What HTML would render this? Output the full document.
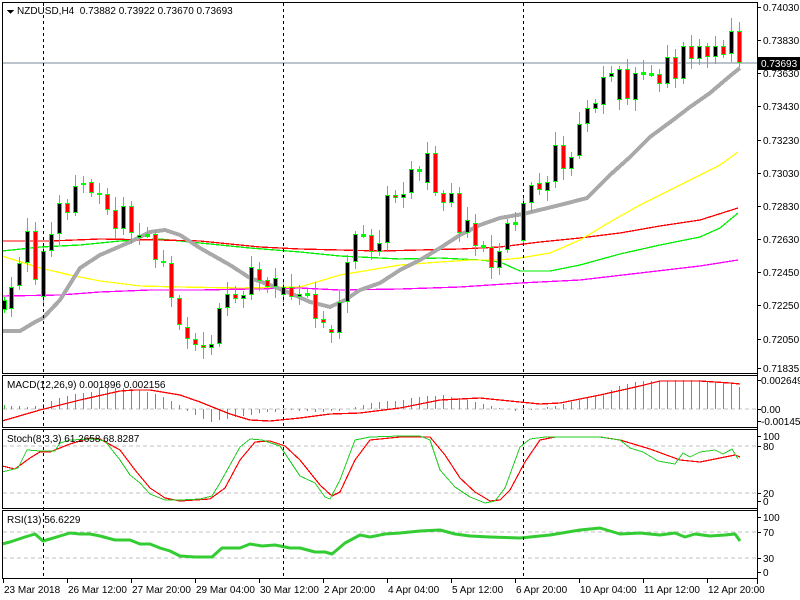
<!DOCTYPE html>
<html><head><meta charset="utf-8">
<style>
html,body{margin:0;padding:0;background:#fff;width:800px;height:600px;overflow:hidden}
svg{display:block}
text{font-family:"Liberation Sans","DejaVu Sans",sans-serif;font-size:10px;fill:#000}
</style></head>
<body>
<svg id="s" width="800" height="600" xmlns="http://www.w3.org/2000/svg" shape-rendering="crispEdges">
<rect width="800" height="600" fill="#fff"/>
</svg>
<script>
var s=document.getElementById('s'),h='';
function ln(x1,y1,x2,y2,c,w,d){h+='<line x1="'+x1+'" y1="'+y1+'" x2="'+x2+'" y2="'+y2+'" stroke="'+c+'" stroke-width="'+(w||1)+'"'+(d?' stroke-dasharray="'+d+'"':'')+'/>';}
function pl(p,c,w,geo){h+='<polyline fill="none" stroke="'+c+'" stroke-width="'+w+'" stroke-linejoin="round" '+(geo?'shape-rendering="auto" ':'')+'points="'+p.map(function(a){return a.join(',')}).join(' ')+'"/>';}
function tx(x,y,t,fill){h+='<text x="'+x+'" y="'+y+'"'+(fill?' style="fill:'+fill+'"':'')+'>'+t+'</text>';}
ln(2,63,757,63,'#778899',1);
ln(3,409,757,409,'#c0c0c0',1,'4,3');
ln(3,446,757,446,'#c0c0c0',1,'4,3');ln(3,493,757,493,'#c0c0c0',1,'4,3');
ln(3,532,757,532,'#c0c0c0',1,'4,3');ln(3,558,757,558,'#c0c0c0',1,'4,3');
pl([[2,296],[60,295],[100,292],[150,290],[200,290],[250,289],[300,288],[340,290],[400,289],[460,287],[520,283],[580,280],[640,273],[700,266],[738,260]],'#ff00ff',1.3);
pl([[2,251],[40,247],[80,245],[120,241],[160,239],[200,243],[250,248],[300,252],[340,256],[400,259],[440,258],[480,260],[500,262],[520,271],[550,271],[580,265],[620,254],[660,245],[700,237],[720,228],[738,213]],'#00ee00',1.3);
pl([[2,241],[50,241],[100,239],[160,240],[200,241],[260,247],[300,249],[340,250],[380,251],[420,250],[460,249],[500,247],[540,242],[580,238],[620,233],[660,226],[700,220],[738,208]],'#ff0000',1.3);
pl([[2,256],[40,268],[70,275],[100,281],[140,286],[180,287],[240,288],[300,287],[340,275],[400,265],[440,262],[470,260],[500,260],[520,258],[550,253],[580,240],[610,222],[640,205],[680,185],[720,165],[738,152]],'#ffff00',1.3);
pl([[2,331],[20,331],[35,322],[43,318],[60,300],[80,268],[100,255],[130,242],[150,232],[165,230],[180,235],[200,248],[230,265],[250,278],[270,285],[290,293],[310,302],[330,307],[345,300],[360,290],[380,283],[400,270],[420,260],[440,248],[460,235],[480,225],[500,218],[523,214],[560,205],[587,198],[610,175],[630,157],[650,137],[673,120],[690,107],[710,93],[730,76],[740,68]],'#a9a9a9',4);
var C=[[4,310,300],[11,309,287],[19,286,263],[27,263,231],[35,231,280],[43,297,251],[51,251,234],[59,234,203],[67,203,213],[75,213,186],[83,185,183],[91,182,193],[99,193,195],[107,194,210],[115,210,229],[123,229,206],[131,206,233],[139,238,235],[147,235,235],[155,234,260],[163,261,263],[171,263,298],[179,298,325],[187,327,339],[195,339,345],[203,345,348],[211,348,344],[219,344,308],[227,308,294],[235,294,299],[243,299,295],[251,295,267],[259,269,281],[267,280,287],[275,287,278],[283,295,287],[291,287,297],[299,297,294],[307,294,294],[315,294,319],[323,319,323],[331,329,333],[339,333,302],[347,302,262],[355,262,234],[363,235,235],[371,235,252],[379,252,243],[387,243,195],[395,195,198],[403,198,194],[411,193,169],[419,170,170],[427,183,153],[435,153,193],[443,193,203],[451,203,193],[459,193,233],[467,233,220],[475,223,246],[483,246,246],[491,247,268],[499,268,251],[507,250,223],[515,223,223],[523,241,203],[531,203,185],[539,183,190],[547,191,182],[555,182,145],[563,145,169],[571,169,157],[579,156,124],[587,124,108],[595,109,103],[603,105,77],[611,77,73],[619,100,69],[627,69,99],[635,100,73],[643,73,73],[651,74,74],[659,74,84],[667,84,57],[675,57,79],[683,79,46],[691,46,59],[699,59,46],[707,46,57],[715,57,46],[723,46,55],[731,54,31],[739,31,63]];
C.forEach(function(c,i){var x=c[0],t=Math.min(c[1],c[2]),b=Math.max(c[1],c[2]);var hi=t-(3+(i*7)%11),lo=b+(3+(i*5)%9);
ln(x+0.5,hi,x+0.5,lo,'#00ff00',1);
var bull=c[2]<c[1];if(b-t<2){h+='<rect x="'+(x-2)+'" y="'+(t-1)+'" width="5" height="3" fill="#00ff00"/>';return;}
h+='<rect x="'+(x-1.5)+'" y="'+(t+0.5)+'" width="4" height="'+(b-t-1)+'" fill="'+(bull?'#000':'#ff0000')+'" stroke="#00ff00" stroke-width="1"/>';});
function interp(P,x){for(var i=0;i<P.length-1;i++){if(x>=P[i][0]&&x<=P[i+1][0]){var f=(x-P[i][0])/(P[i+1][0]-P[i][0]);return P[i][1]+f*(P[i+1][1]-P[i][1]);}}return P[P.length-1][1];}
var MH=[[3,405],[30,407],[43,404],[60,398],[75,394],[90,392],[100,388],[125,388],[150,392],[170,400],[180,406],[190,413],[210,422],[230,418],[260,413],[290,410],[320,412],[340,411],[360,405],[380,402],[400,400],[420,397],[440,395],[460,398],[480,403],[500,408],[520,412],[530,410],[560,405],[580,400],[600,395],[620,385],[640,381],[700,380],[730,383],[739,387]];
C.forEach(function(c){var x=c[0],v=Math.round(interp(MH,x));if(Math.abs(v-409)>=1)ln(x+0.5,409,x+0.5,v,'#3cb83c',1.2);});
pl([[2,421],[40,410],[80,400],[120,391],[135,390],[150,390],[180,395],[200,402],[230,414],[250,420],[270,421],[300,418],[330,414],[360,413],[400,408],[440,400],[480,398],[520,402],[540,404],[560,403],[600,395],[640,386],[660,381],[700,381],[730,383],[740,384]],'#ff0000',1.3);
pl([[2,466],[15,469],[30,458],[40,452],[50,452],[70,444],[90,438],[100,439],[120,450],[135,470],[150,488],[165,498],[180,501],[210,499],[225,488],[240,460],[255,442],[270,441],[285,446],[300,460],[320,485],[332,496],[340,492],[355,460],[370,440],[400,437],[430,437],[445,455],[460,478],[475,492],[490,501],[500,500],[510,490],[525,462],[540,440],[555,437],[600,437],[620,440],[650,449],[680,460],[700,462],[720,458],[735,455],[740,457]],'#ff0000',1.2);
pl([[2,472],[10,470],[18,468],[27,450],[40,451],[55,451],[60,443],[70,440],[95,439],[105,441],[120,460],[130,475],[140,483],[150,494],[165,500],[180,500],[200,499],[212,496],[220,483],[240,447],[250,439],[262,440],[280,446],[300,476],[315,483],[325,497],[330,499],[340,480],[355,440],[370,437],[400,436],[420,436],[430,440],[440,470],[455,487],[470,497],[485,503],[495,501],[505,488],[520,447],[530,439],[545,437],[600,437],[620,440],[630,448],[643,452],[658,461],[675,464],[683,453],[690,457],[700,452],[715,450],[723,454],[732,449],[738,459]],'#22cc22',1);
pl([[2,544],[10,542],[25,537],[35,534],[43,541],[50,539],[60,536],[70,533],[80,534],[90,534],[100,536],[115,540],[130,540],[140,544],[150,544],[160,548],[170,551],[180,556],[195,557],[212,557],[222,548],[240,548],[250,544],[262,546],[275,545],[290,548],[300,548],[315,552],[325,552],[332,554],[345,543],[360,535],[370,537],[385,534],[400,533],[420,531],[440,530],[455,534],[470,536],[490,537],[520,538],[550,535],[580,530],[600,528],[620,534],[640,533],[660,535],[675,533],[685,537],[695,534],[710,536],[725,535],[735,534],[740,541]],'#33cc33',3,true);
[43,283,523].forEach(function(x){ln(x+0.5,3,x+0.5,579,'#000',1,'3,3');});
function fr(y1,y2){h+='<rect x="2.5" y="'+(y1+0.5)+'" width="755" height="'+(y2-y1)+'" fill="none" stroke="#000"/>';}
fr(2,373);fr(375,427);fr(429,508);fr(510,578);
ln(757.5,2,757.5,584,'#000',1);
var P=[[7,'0.74030'],[40,'0.73830'],[73,'0.73630'],[106,'0.73430'],[140,'0.73230'],[173,'0.73030'],[206,'0.72830'],[239,'0.72630'],[272,'0.72450'],[305,'0.72250'],[339,'0.72050'],[368,'0.71835']];
P.forEach(function(p){ln(757,p[0]+0.5,761,p[0]+0.5,'#000');tx(763,p[0]+4,p[1]);});
h+='<rect x="758" y="57" width="42" height="13" fill="#000"/>';tx(761,67,'0.73693','#fff');
[[380,'0.002649'],[409,'0.00'],[421,'-0.001456']].forEach(function(p){ln(757,p[0]+0.5,761,p[0]+0.5,'#000');tx(761,p[0]+4,p[1]);});
[[436,'100'],[446,'80'],[493,'20'],[501,'0']].forEach(function(p){ln(757,p[0]+0.5,761,p[0]+0.5,'#000');tx(763,p[0]+4,p[1]);});
[[517,'100'],[532,'70'],[558,'30'],[572,'0']].forEach(function(p){ln(757,p[0]+0.5,761,p[0]+0.5,'#000');tx(763,p[0]+4,p[1]);});
var T=['23 Mar 2018','26 Mar 12:00','27 Mar 20:00','29 Mar 04:00','30 Mar 12:00','2 Apr 20:00','4 Apr 04:00','5 Apr 12:00','6 Apr 20:00','10 Apr 04:00','11 Apr 12:00','12 Apr 20:00'];
T.forEach(function(t,i){var x=3+64*i;ln(x+0.5,579,x+0.5,583,'#000');tx(x+1,593,t);});
h+='<polygon points="7,10 14,10 10.5,14" fill="#000"/>';
tx(17,14,'NZDUSD,H4&#160; 0.73882 0.73922 0.73670 0.73693');
tx(7,388,'MACD(12,26,9) 0.001896 0.002156');
tx(7,442,'Stoch(8,3,3) 61.2658 68.8287');
tx(7,523,'RSI(13) 56.6229');
s.insertAdjacentHTML('beforeend',h);
</script>
</body></html>
